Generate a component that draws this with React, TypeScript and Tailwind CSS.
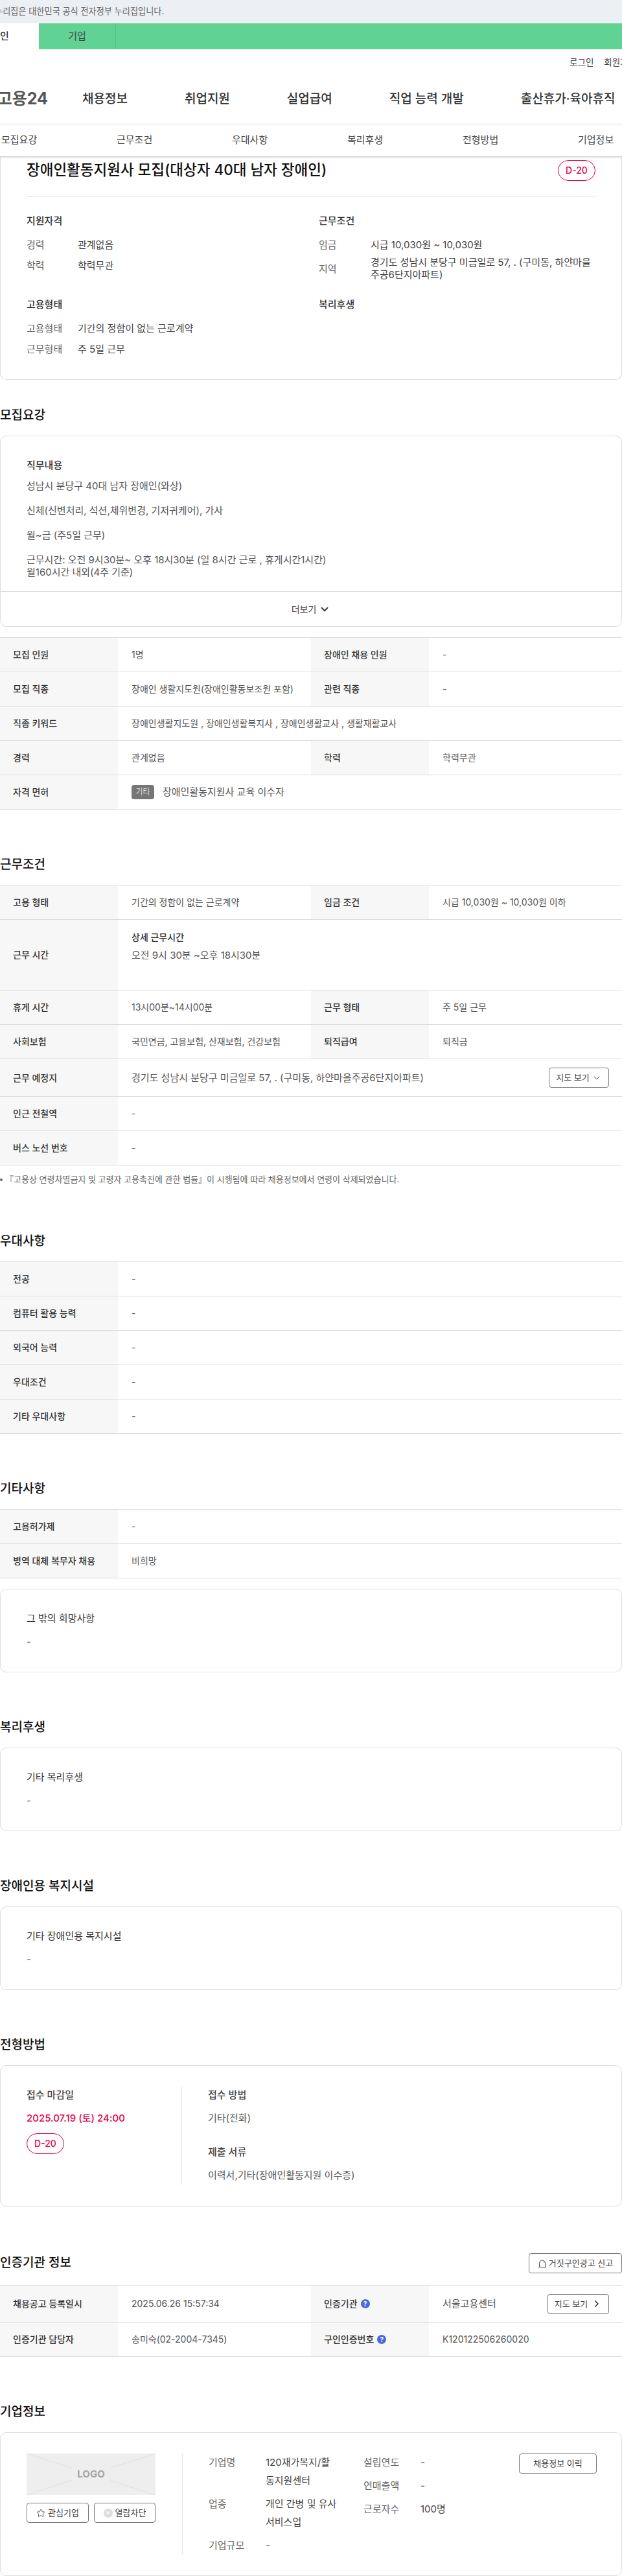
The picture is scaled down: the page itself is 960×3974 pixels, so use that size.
import { ChevronDown, ChevronRight, Star } from "lucide-react"
import type { ReactNode } from "react"

const navItems = ["채용정보", "취업지원", "실업급여", "직업 능력 개발", "출산휴가·육아휴직"]
const tabs = ["모집요강", "근무조건", "우대사항", "복리후생", "전형방법", "기업정보"]

function Heading({ children, first }: { children: ReactNode; first?: boolean }) {
  return (
    <h2 className={`mb-[18px] h-[26px] text-[19px] font-medium leading-[26px] text-[#111] ${first ? "mt-[42px]" : "mt-[72px]"}`}>
      {children}
    </h2>
  )
}

function Th({ children }: { children: ReactNode }) {
  return <div className="flex w-[182px] shrink-0 items-center gap-[5px] bg-[#f7f7f7] pl-5 text-sm font-medium text-[#333]">{children}</div>
}

function Row({ label, value, label2, value2, h = "h-[53px]" }: { label: ReactNode; value: ReactNode; label2?: ReactNode; value2?: ReactNode; h?: string }) {
  return (
    <div className={`flex border-b border-[#ddd] ${h}`}>
      <Th>{label}</Th>
      <div className={`flex items-center pl-[21px] text-sm text-[#555] ${label2 ? "w-[298px]" : "flex-1"}`}>{value}</div>
      {label2 && <Th>{label2}</Th>}
      {label2 && <div className="flex flex-1 items-center pl-[21px] text-sm text-[#555]">{value2}</div>}
    </div>
  )
}

function Table({ children }: { children: ReactNode }) {
  return <div className="border-t border-[#ddd]">{children}</div>
}

function SimpleCard({ title, className }: { title: string; className?: string }) {
  return (
    <div className={`h-[129px] rounded-[10px] border border-[#ddd] px-10 pt-[34px] ${className ?? ""}`}>
      <div className="text-[15px] leading-[22px] text-[#333]">{title}</div>
      <div className="mt-[14px] text-[15px] leading-[22px] text-[#555]">-</div>
    </div>
  )
}

function Badge() {
  return (
    <span className="flex h-8 w-[58px] shrink-0 items-center justify-center rounded-2xl border border-[#e6004d] text-sm font-medium text-[#e6004d]">
      D-20
    </span>
  )
}

function Help() {
  return <span className="flex size-[14px] items-center justify-center rounded-full bg-[#4a68de] text-[10px] font-bold leading-none text-white">?</span>
}

function OutlineButton({ children, className }: { children: ReactNode; className?: string }) {
  return (
    <button className={`flex h-[31px] shrink-0 items-center justify-center rounded-[4px] border border-[#777] bg-white text-[13px] text-[#444] ${className ?? ""}`}>
      {children}
    </button>
  )
}

function Info({ label, value, labelWidth }: { label: string; value: ReactNode; labelWidth: string }) {
  return (
    <div className="flex text-[15px] leading-[22px]">
      <div className={`shrink-0 text-[#666] ${labelWidth}`}>{label}</div>
      <div className="break-all text-[#444]">{value}</div>
    </div>
  )
}

export default function App() {
  return (
    <div className="w-[960px] overflow-hidden bg-white font-['Inter','Noto_Sans_CJK_KR',sans-serif] text-[#333]">
      <div className="flex h-9 items-center whitespace-nowrap bg-[#eceff4] text-[13.2px] text-[#666]">
        <span className="-ml-[8px]">누리집은 대한민국 공식 전자정부 누리집입니다.</span>
      </div>
      <div className="flex h-10 bg-[#60d394] text-[15px]">
        <div className="flex w-[60px] items-center bg-white font-medium text-[#333]">인</div>
        <div className="flex w-[119px] items-center justify-center border-r border-[#56c486] text-[#444]">기업</div>
      </div>

      <div className="flex h-10 items-center justify-end gap-4 whitespace-nowrap pt-[1px] text-[13.5px] text-[#444]">
        <span>로그인</span>
        <span className="-mr-[22px]">회원가입</span>
      </div>

      <header className="flex h-[76px] items-center whitespace-nowrap border-b border-[#e8e8e8] pb-[1px]">
        <div className="flex w-[127px] shrink-0 justify-end pr-[53px] text-[25px] font-bold text-[#555]">고용24</div>
        <nav className="flex gap-[88px] text-[19px] font-medium text-[#333]">
          {navItems.map((item) => (
            <span key={item}>{item}</span>
          ))}
        </nav>
      </header>

      <div className="relative z-10 flex h-[49px] items-center bg-white pl-[2px] text-[15px] text-[#444] shadow-[0_1px_3px_rgba(0,0,0,0.25)]">
        {tabs.map((tab) => (
          <span key={tab} className="w-[178px] shrink-0">{tab}</span>
        ))}
      </div>

      <section className="rounded-b-[10px] border-x border-b border-[#ddd] px-10 pb-[35px] pt-[6px]">
        <div className="flex h-[57px] items-start justify-between border-b border-[#e5e5e5]">
          <h1 className="text-[22.5px] font-medium leading-[30px] text-[#111]">장애인활동지원사 모집(대상자 40대 남자 장애인)</h1>
          <Badge />
        </div>
        <div className="mt-[26px] grid grid-cols-[451px_1fr] gap-y-[26px]">
          <div>
            <h3 className="text-[15px] font-medium leading-[22px]">지원자격</h3>
            <div className="mt-[15px] flex flex-col gap-[10px]">
              <Info label="경력" value="관계없음" labelWidth="w-[79px]" />
              <Info label="학력" value="학력무관" labelWidth="w-[79px]" />
            </div>
          </div>
          <div>
            <h3 className="text-[15px] font-medium leading-[22px]">근무조건</h3>
            <div className="mt-[15px] flex flex-col gap-[6px]">
              <Info label="임금" value="시급 10,030원 ~ 10,030원" labelWidth="w-[80px]" />
              <div className="flex items-center text-[15px] leading-[19px]">
                <div className="w-[80px] shrink-0 text-[#666]">지역</div>
                <div className="break-all text-[#444]">경기도 성남시 분당구 미금일로 57, . (구미동, 하얀마을주공6단지아파트)</div>
              </div>
            </div>
          </div>
          <div>
            <h3 className="text-[15px] font-medium leading-[22px]">고용형태</h3>
            <div className="mt-[15px] flex flex-col gap-[10px]">
              <Info label="고용형태" value="기간의 정함이 없는 근로계약" labelWidth="w-[79px]" />
              <Info label="근무형태" value="주 5일 근무" labelWidth="w-[79px]" />
            </div>
          </div>
          <h3 className="text-[15px] font-medium leading-[22px]">복리후생</h3>
        </div>
      </section>

      <Heading first>모집요강</Heading>
      <div className="h-[295px] rounded-[10px] border border-[#ddd]">
        <div className="h-[240px] border-b border-[#ddd] px-10 pt-[34px]">
          <h3 className="text-[15px] font-medium leading-[22px]">직무내용</h3>
          <p className="mt-[11px] whitespace-pre-line text-[15px] leading-[19px] text-[#555]">
            {"성남시 분당구 40대 남자 장애인(와상)\n\n신체(신변처리, 석션,체위변경, 기저귀케어), 가사\n\n월~금 (주5일 근무)\n\n근무시간: 오전 9시30분~ 오후 18시30분 (일 8시간 근로 , 휴게시간1시간)\n월160시간 내외(4주 기준)"}
          </p>
        </div>
        <div className="flex h-[53px] items-center justify-center gap-1 text-sm text-[#444]">
          더보기
          <ChevronDown size={18} strokeWidth={2.5} className="text-[#333]" />
        </div>
      </div>

      <div className="mt-4">
        <Table>
          <Row label="모집 인원" value="1명" label2="장애인 채용 인원" value2="-" />
          <Row label="모집 직종" value="장애인 생활지도원(장애인활동보조원 포함)" label2="관련 직종" value2="-" />
          <Row label="직종 키워드" value="장애인생활지도원 , 장애인생활복지사 , 장애인생활교사 , 생활재활교사" />
          <Row label="경력" value="관계없음" label2="학력" value2="학력무관" />
          <Row
            label="자격 면허"
            value={
              <span className="flex items-center gap-[13px] text-[15px]">
                <span className="flex h-[22px] w-[35px] items-center justify-center rounded-[4px] bg-[#767676] text-xs text-[#ddd]">기타</span>
                장애인활동지원사 교육 이수자
              </span>
            }
          />
        </Table>
      </div>

      <Heading>근무조건</Heading>
      <Table>
        <Row label="고용 형태" value="기간의 정함이 없는 근로계약" label2="임금 조건" value2="시급 10,030원 ~ 10,030원 이하" />
        <Row
          label="근무 시간"
          h="h-[109px]"
          value={
            <div className="-mt-[26px]">
              <div className="text-sm font-medium leading-[22px] text-[#333]">상세 근무시간</div>
              <div className="mt-[6px] text-[15px] leading-[22px]">오전 9시 30분 ~오후 18시30분</div>
            </div>
          }
        />
        <Row label="휴게 시간" value="13시00분~14시00분" label2="근무 형태" value2="주 5일 근무" />
        <Row label="사회보험" value="국민연금, 고용보험, 산재보험, 건강보험" label2="퇴직급여" value2="퇴직금" />
        <Row
          label="근무 예정지"
          h="h-[58px]"
          value={
            <div className="flex w-full items-center justify-between pr-5 text-[15px]">
              경기도 성남시 분당구 미금일로 57, . (구미동, 하얀마을주공6단지아파트)
              <OutlineButton className="h-8 w-[93px] gap-[3px]">
                지도 보기
                <ChevronDown size={16} strokeWidth={1.5} />
              </OutlineButton>
            </div>
          }
        />
        <Row label="인근 전철역" value="-" />
        <Row label="버스 노선 번호" value="-" />
      </Table>
      <p className="mt-3 flex h-5 items-center gap-1 text-[13px] text-[#666]">
        <span className="size-1 shrink-0 rounded-full bg-[#666]" />
        『고용상 연령차별금지 및 고령자 고용촉진에 관한 법률』이 시행됨에 따라 채용정보에서 연령이 삭제되었습니다.
      </p>

      <Heading>우대사항</Heading>
      <Table>
        <Row label="전공" value="-" />
        <Row label="컴퓨터 활용 능력" value="-" />
        <Row label="외국어 능력" value="-" />
        <Row label="우대조건" value="-" />
        <Row label="기타 우대사항" value="-" />
      </Table>

      <Heading>기타사항</Heading>
      <Table>
        <Row label="고용허가제" value="-" />
        <Row label="병역 대체 복무자 채용" value="비희망" />
      </Table>
      <SimpleCard title="그 밖의 희망사항" className="mt-4" />

      <Heading>복리후생</Heading>
      <SimpleCard title="기타 복리후생" />

      <Heading>장애인용 복지시설</Heading>
      <SimpleCard title="기타 장애인용 복지시설" />

      <Heading>전형방법</Heading>
      <div className="flex rounded-[10px] border border-[#ddd] px-10 py-8 text-[15px] leading-[22px]">
        <div className="w-[240px] shrink-0 border-r border-[#e5e5e5]">
          <div className="mt-[2px] font-medium text-[#444]">접수 마감일</div>
          <div className="mt-[14px] font-medium text-[#e6004d]">2025.07.19 (토) 24:00</div>
          <div className="mt-3">
            <Badge />
          </div>
        </div>
        <div className="pb-1 pl-10 pt-[2px]">
          <div className="font-medium text-[#444]">접수 방법</div>
          <div className="mt-[14px] text-[#555]">기타(전화)</div>
          <div className="mt-[30px] font-medium text-[#444]">제출 서류</div>
          <div className="mt-[14px] text-[#555]">이력서,기타(장애인활동지원 이수증)</div>
        </div>
      </div>

      <div className="mb-[18px] mt-[72px] flex h-[31px] items-center justify-between">
        <h2 className="text-[19px] font-medium text-[#111]">인증기관 정보</h2>
        <OutlineButton className="w-[144px] gap-[3px]">
          <svg width="14" height="14" viewBox="0 0 14 14" fill="none" stroke="#444" strokeWidth="1">
            <path d="M2.5 12V6.5a4.5 4.5 0 0 1 9 0V12" />
            <path d="M1 12.5h12" />
            <path d="M9 3.5a3 3 0 0 1 1 2" />
          </svg>
          거짓구인광고 신고
        </OutlineButton>
      </div>
      <Table>
        <Row
          label="채용공고 등록일시"
          h="h-[57px]"
          value="2025.06.26 15:57:34"
          label2={<>인증기관 <Help /></>}
          value2={
            <div className="flex w-full items-center justify-between pr-5 text-[15px]">
              서울고용센터
              <OutlineButton className="w-[95px] gap-[6px]">
                지도 보기
                <ChevronRight size={16} strokeWidth={2.5} className="text-[#333]" />
              </OutlineButton>
            </div>
          }
        />
        <Row label="인증기관 담당자" value="송미숙(02-2004-7345)" label2={<>구인인증번호 <Help /></>} value2="K120122506260020" />
      </Table>

      <Heading>기업정보</Heading>
      <div className="flex h-[222px] rounded-[10px] border border-[#ddd] pl-10 pr-10 pt-8">
        <div className="w-[240px] shrink-0">
          <div className="relative flex h-16 w-[199px] items-center justify-center bg-[#eee]">
            <svg className="absolute inset-0 size-full" viewBox="0 0 199 64" preserveAspectRatio="none">
              <path d="M0 0L199 64M199 0L0 64" stroke="#e0e0e0" strokeWidth="1" />
            </svg>
            <span className="relative bg-[#eee] px-2 text-[15px] font-bold text-[#a5a5a5]">LOGO</span>
          </div>
          <div className="mt-3 flex gap-2">
            <OutlineButton className="w-[96px] gap-1">
              <Star size={14} strokeWidth={1.5} />
              관심기업
            </OutlineButton>
            <OutlineButton className="w-[95px] gap-1">
              <span className="flex size-[14px] items-center justify-center rounded-full bg-[#ddd] text-[9px] leading-none text-white">✕</span>
              열람차단
            </OutlineButton>
          </div>
        </div>
        <div className="flex h-[156px] flex-1 border-l border-[#e5e5e5] pl-10">
          <div className="flex w-[239px] shrink-0 flex-col gap-2 text-[15px] leading-[28px]">
            <div className="flex">
              <div className="w-[88px] shrink-0 text-[#666]">기업명</div>
              <div className="w-[110px] break-all text-[#444]">120재가복지/활동지원센터</div>
            </div>
            <div className="flex">
              <div className="w-[88px] shrink-0 text-[#666]">업종</div>
              <div className="w-[110px] text-[#444]">개인 간병 및 유사 서비스업</div>
            </div>
            <div className="flex">
              <div className="w-[88px] shrink-0 text-[#666]">기업규모</div>
              <div className="text-[#444]">-</div>
            </div>
          </div>
          <div className="flex w-[240px] flex-col gap-2 text-[15px] leading-[28px]">
            <div className="flex">
              <div className="w-[88px] text-[#666]">설립연도</div>
              <div className="text-[#444]">-</div>
            </div>
            <div className="flex">
              <div className="w-[88px] text-[#666]">연매출액</div>
              <div className="text-[#444]">-</div>
            </div>
            <div className="flex">
              <div className="w-[88px] text-[#666]">근로자수</div>
              <div className="text-[#444]">100명</div>
            </div>
          </div>
          <OutlineButton className="w-[120px] text-sm">채용정보 이력</OutlineButton>
        </div>
      </div>
    </div>
  )
}
